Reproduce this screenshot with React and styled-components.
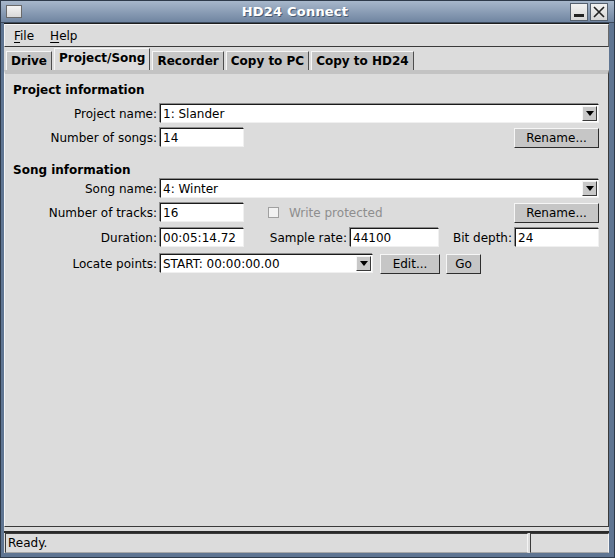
import React from 'react'
import styled, { createGlobalStyle } from 'styled-components'

const GlobalStyle = createGlobalStyle`
html, body {
  margin:0;
  padding:0;
  background:#dcdcdc;
}
body {
  font-family:"DejaVu Sans", "Liberation Sans", sans-serif;
  font-size:12px;
  color:#000;
}
`

const Window = styled.div`
width:615px;
height:558px;
display:flex;
flex-direction:column;
background:#5f7592;
box-sizing:border-box;
border:1px solid #2e3a4a;
`
const TitleBar = styled.div`
height:21px;
display:flex;
align-items:center;
padding:0 6px 0 5px;
background:linear-gradient(#a7b7cb, #7085a1);
border-bottom:1px solid #3c4a5c;
`
const MenuIcon = styled.div`
width:14px;
height:11px;
background:linear-gradient(#f4f4f4, #d8d8d8);
border:1px solid #6a6a6a;
`
const Title = styled.div`
flex:1;
text-align:center;
color:#fff;
font-weight:bold;
font-size:13px;
text-shadow:1px 1px 0 #4a5a70;
letter-spacing:0.2px;
`
const WinButton = styled.div`
width:16px;
height:16px;
margin-left:2px;
background:linear-gradient(#f2f2f2, #d6d6d6);
border:1px solid #55606e;
display:flex;
align-items:center;
justify-content:center;
`
const Client = styled.div`
flex:1;
display:flex;
flex-direction:column;
margin:0 5px 4px 3px;
background:#dcdcdc;
border-top:1px solid #1e1e1e;
`
const MenuBar = styled.div`
height:21px;
display:flex;
align-items:center;
gap:16px;
padding-left:9px;
border:1px solid;
border-color:#f4f4f4 #6a6a6a #3a3a3a #f4f4f4;
`
const MenuItem = styled.span`
font-size:12px;
& u { text-decoration:underline; text-underline-offset:2px; }
`
const TabBar = styled.div`
height:22px;
display:flex;
align-items:flex-end;
padding-left:2px;
gap:2px;
margin-top:1px;
`
const Tab = styled.div`
height:${p => p.$active ? '22px' : '19px'};
box-sizing:border-box;
padding:0 4px;
display:flex;
align-items:${p => p.$active ? 'flex-start' : 'center'};
padding-top:${p => p.$active ? '2px' : '0'};
font-weight:bold;
font-size:12px;
background:${p => p.$active ? '#dcdcdc' : '#c6c6c6'};
border-left:1px solid #f6f6f6;
border-top:1px solid #f6f6f6;
border-right:1px solid #4e4e4e;
`
const Panel = styled.div`
flex:1;
display:flex;
flex-direction:column;
border-top:4px solid #c3c3c3;
border-right:1px solid #3a3a3a;
border-bottom:1px solid #3a3a3a;
border-left:1px solid #f4f4f4;
padding:8px 9px 0 8px;
`
const Heading = styled.div`
font-weight:bold;
font-size:12px;
height:16px;
line-height:16px;
margin-top:${p => p.$top || 0}px;
`
const Row = styled.div`
display:flex;
align-items:center;
height:19px;
margin-top:${p => p.$top || 5}px;
`
const Label = styled.span`
width:${p => p.$w || 147}px;
text-align:right;
padding-right:3px;
box-sizing:border-box;
white-space:nowrap;
flex-shrink:0;
`
const Field = styled.div`
width:${p => p.$w}px;
height:19px;
box-sizing:border-box;
background:#fff;
border:1px solid;
border-color:#1a1a1a #f0f0f0 #f0f0f0 #1a1a1a;
box-shadow:-1px -1px 0 #8c8c8c;
display:flex;
align-items:center;
padding-left:2px;
font-size:12px;
flex-shrink:0;
position:relative;
`
const DropArrow = styled.div`
position:absolute;
right:1px;
top:1px;
width:13px;
height:13px;
background:#c8c8c8;
border:1px solid;
border-color:#f6f6f6 #3a3a3a #3a3a3a #f6f6f6;
display:flex;
align-items:center;
justify-content:center;
&::after {
  content:'';
  border-left:4px solid transparent;
  border-right:4px solid transparent;
  border-top:5px solid #000;
}
`
const Button = styled.div`
width:${p => p.$w}px;
height:20px;
box-sizing:border-box;
background:#c6c6c6;
border:1px solid;
border-color:#f6f6f6 #2e2e2e #2e2e2e #f6f6f6;
display:flex;
align-items:center;
justify-content:center;
font-size:12px;
margin-left:${p => p.$ml || 0}px;
flex-shrink:0;
`
const Spacer = styled.div`
flex:1;
`
const Check = styled.div`
width:9px;
height:9px;
margin-left:24px;
background:#f2f2f2;
border:1px solid #a0a0a0;
flex-shrink:0;
`
const Muted = styled.span`
color:#8e8e8e;
margin-left:10px;
`
const StatusBar = styled.div`
height:20px;
display:flex;
margin-top:4px;
border-top:2px solid #2a2a2a;
padding-left:1px;
gap:2px;
`
const StatusCell = styled.div`
width:${p => p.$w ? p.$w + 'px' : 'auto'};
flex:${p => p.$w ? 'none' : 1};
box-sizing:border-box;
border:1px solid;
border-color:#3a3a3a #f4f4f4 #a8a8a8 #3a3a3a;
display:flex;
align-items:center;
padding-left:2px;
font-size:12px;
`

const App = () => {
  return (
    <>
      <GlobalStyle />
      <Window>
        <TitleBar>
          <MenuIcon />
          <Title>HD24 Connect</Title>
          <WinButton>
            <svg width="12" height="12" viewBox="0 0 12 12"><rect x="1" y="8" width="10" height="3" fill="#222" /></svg>
          </WinButton>
          <WinButton>
            <svg width="12" height="12" viewBox="0 0 12 12"><path d="M1 1 L11 11 M11 1 L1 11" stroke="#222" strokeWidth="1.6" /></svg>
          </WinButton>
        </TitleBar>
        <Client>
          <MenuBar>
            <MenuItem><u>F</u>ile</MenuItem>
            <MenuItem><u>H</u>elp</MenuItem>
          </MenuBar>
          <TabBar>
            <Tab>Drive</Tab>
            <Tab $active>Project/Song</Tab>
            <Tab>Recorder</Tab>
            <Tab>Copy to PC</Tab>
            <Tab>Copy to HD24</Tab>
          </TabBar>
          <Panel>
            <Heading>Project information</Heading>
            <Row $top={6}>
              <Label>Project name:</Label>
              <Field $w={439}>1: Slander<DropArrow /></Field>
            </Row>
            <Row>
              <Label>Number of songs:</Label>
              <Field $w={84}>14</Field>
              <Spacer />
              <Button $w={85}>Rename...</Button>
            </Row>
            <Heading $top={15}>Song information</Heading>
            <Row $top={1}>
              <Label>Song name:</Label>
              <Field $w={439}>4: Winter<DropArrow /></Field>
            </Row>
            <Row>
              <Label>Number of tracks:</Label>
              <Field $w={84}>16</Field>
              <Check />
              <Muted>Write protected</Muted>
              <Spacer />
              <Button $w={85}>Rename...</Button>
            </Row>
            <Row $top={6}>
              <Label>Duration:</Label>
              <Field $w={84}>00:05:14.72</Field>
              <Label $w={106}>Sample rate:</Label>
              <Field $w={89}>44100</Field>
              <Label $w={76}>Bit depth:</Label>
              <Field $w={84}>24</Field>
            </Row>
            <Row $top={7}>
              <Label>Locate points:</Label>
              <Field $w={213}>START: 00:00:00.00<DropArrow /></Field>
              <Button $w={60} $ml={7}>Edit...</Button>
              <Button $w={35} $ml={6}>Go</Button>
            </Row>
          </Panel>
          <StatusBar>
            <StatusCell>Ready.</StatusCell>
            <StatusCell $w={79} />
          </StatusBar>
        </Client>
      </Window>
    </>
  )
}

export default App
